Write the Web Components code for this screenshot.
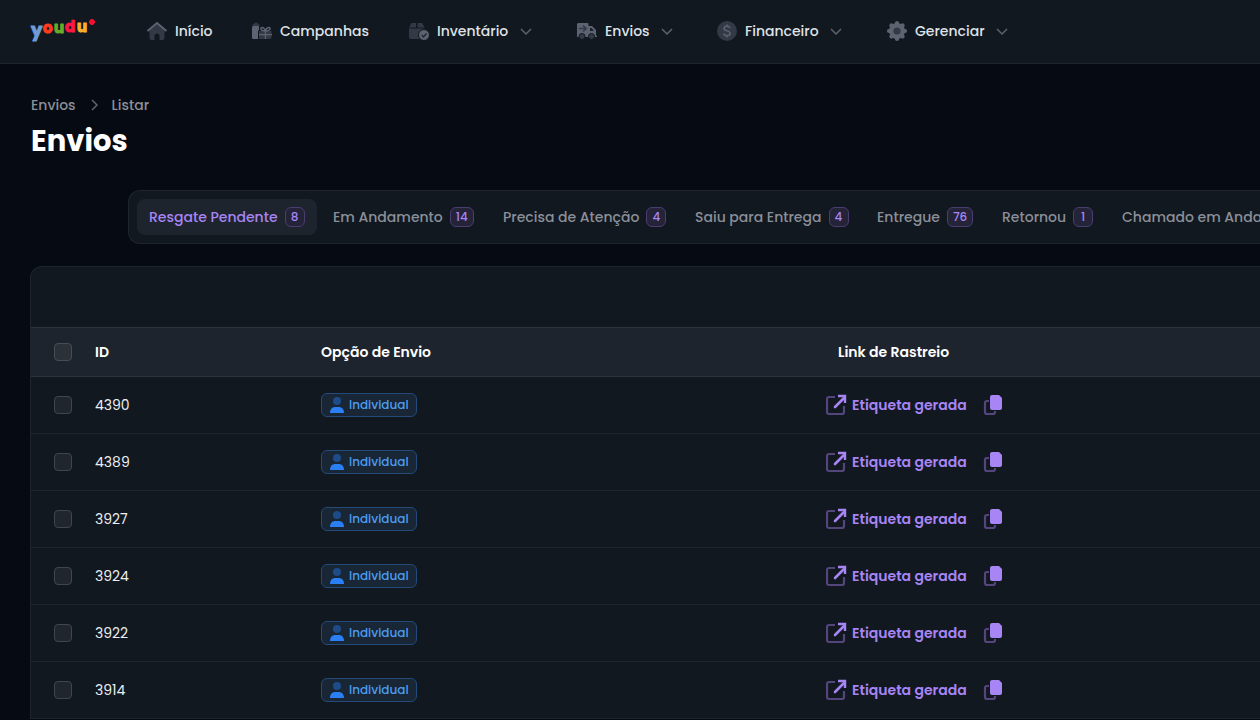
<!DOCTYPE html>
<html lang="pt-BR">
<head>
<meta charset="utf-8">
<meta name="viewport" content="width=device-width, initial-scale=1">
<title>Envios</title>
<style>
  html { background: #060a12; color-scheme: dark; }
  body {
    margin: 0;
    min-height: 100vh;
    overflow: hidden;
    color: #fff;
    background: #060a12;
    font: 500 14px/24px Poppins, Inter, sans-serif;
    -webkit-font-smoothing: antialiased;
    --surface: #111820;
    --surface-2: #1e242d;
    --line: #1f252e;
    --muted: #8b8f98;
    --icon: #5d6370;
    --icon-dim: #333a46;
    --violet: #a785f4;
  }
</style>
</head>
<body>
<app-page></app-page>
<script>
const define = (name, html, setup) => {
  const template = document.createElement('template');
  template.innerHTML = html;
  customElements.define(name, class extends HTMLElement {
    connectedCallback() {
      if (this.shadowRoot) return;
      this.attachShadow({ mode: 'open' }).append(template.content.cloneNode(true));
      if (setup) setup(this, this.shadowRoot);
    }
  });
};

const icons = {
  home: `<path d="M3.500 10v8a2 2 0 0 0 2 2h3v-4a2.500 2.500 0 0 1 5 0v4h3a2 2 0 0 0 2-2v-8L11 4z" fill="var(--icon-dim)"/><path d="M1.500 11 11 3l9.500 8" fill="none" stroke="var(--icon)" stroke-width="2"/>`,
  gifts: `<path d="M1.500 6V4.500L3 4l1-1.500L5 3l1.500-.5.5 1.500 1.500.5V6z" fill="var(--icon-dim)"/><path d="M2 6h6v4L7 11v8H2a2 2 0 0 1-1-1V7z" fill="var(--icon)"/><path d="M8 11h12.500v7l-1 1H8z" fill="var(--icon-dim)"/><path d="M8 14h13v1.200H8zM13.800 10.500H15V19h-1.200z" fill="var(--icon)"/><path d="M14.400 11C9 11 9 7.500 11 7.500c2 0 2.800 1.500 3.400 3.500.6-2 1.600-3.500 3.600-3.500s2 3.500-3.600 3.500z" fill="none" stroke="var(--icon)" stroke-width="1.400"/>`,
  box: `<path d="M3.500 3H8v4.500H1zM9.500 3H14l2.500 4.500h-7zM1 8.500h15.500V19H3a2 2 0 0 1-2-2z" fill="var(--icon-dim)"/><circle cx="16" cy="15" r="5.500" fill="var(--icon)" stroke="var(--surface)"/><path d="m13.700 15 1.800 1.800 3-3.300" stroke="#242b36" stroke-width="1.500" fill="none"/>`,
  truck: `<path d="M2 3h9.500a1 1 0 0 1 1 1v2H16l4 4v5.500h1V17H1V4z" fill="var(--icon)"/><path d="M14 8h1.600l2.400 3H14z" fill="#1b222c"/><path d="M3 8.500h7M7 5.500l3 3-3 3" stroke="#343b47" stroke-width="1.700" fill="none"/><circle cx="6" cy="16.500" r="3" fill="#343b47" stroke="var(--surface)"/><circle cx="15.500" cy="16.500" r="3" fill="#343b47" stroke="var(--surface)"/>`,
  coin: `<circle cx="11" cy="11" r="10" fill="var(--icon-dim)"/><path d="M14 8c-.5-1.300-1.700-1.700-3-1.700-1.700 0-3 .8-3 2.200 0 3 6.200 1.700 6.200 4.800 0 1.500-1.500 2.400-3.200 2.400s-3-.8-3.300-2.200M11 4.500v2M11 15.500v2" stroke="var(--icon)" stroke-width="1.500" fill="none"/>`,
  gear: `<circle cx="11" cy="11" r="8" fill="var(--icon)"/><g stroke="var(--icon)" stroke-width="4.200" stroke-linecap="round"><path d="M11 3v16M3 11h16M5.400 5.400l11.200 11.200M16.600 5.400 5.400 16.600"/></g><circle cx="11" cy="11" r="3.600" fill="#333a46"/>`
};

define('ui-icon', `<style>:host{display:block;flex:none;width:22px;height:22px}svg{display:block}</style>
  <svg width="22" height="22" viewBox="0 0 22 22" aria-hidden="true"></svg>`,
  (el, root) => { root.querySelector('svg').innerHTML = icons[el.getAttribute('name')]; });

define('brand-logo', `<style>
  :host{display:block}a,svg{display:block}
  svg{overflow:visible}
  text{font:700 15px/1 Poppins,Inter,sans-serif;stroke-width:1;stroke-linejoin:round}
  .tall{font-size:18px}
</style>
  <a href="#" aria-label="youdu"><svg width="66" height="26" viewBox="0 0 66 26">
    <text><tspan class="tall" x="0" y="18" fill="#6f9bd8" stroke="#6f9bd8">y</tspan><tspan x="12" y="15" fill="#ff3b1f" stroke="#ff3b1f">o</tspan><tspan x="23" y="15" fill="#6aaa2a" stroke="#6aaa2a">u</tspan><tspan x="34" y="14" fill="#ff1744" stroke="#ff1744">d</tspan><tspan x="46" y="14" fill="#ffae2b" stroke="#ffae2b">u</tspan></text>
    <path d="M61 1v6M58 4h6M59 2l4 4M63 2l-4 4" stroke="#f5112d" stroke-width="2"/>
  </svg></a>`);

define('nav-item', `<style>
  :host{display:block}
  a,button{display:flex;align-items:center;width:100%;gap:7px;padding:0;border:0;background:none;color:#dfe2e7;font:inherit;text-decoration:none;white-space:nowrap;cursor:pointer}
  .chevron{flex:none;width:20px;height:20px;margin-left:auto;fill:none;stroke:var(--icon);stroke-width:1.500}
</style>`, (el, root) => {
  const menu = el.hasAttribute('menu');
  const control = document.createElement(menu ? 'button' : 'a');
  if (menu) { control.type = 'button'; control.setAttribute('aria-haspopup', 'true'); } else control.href = '#';
  control.innerHTML = `<ui-icon name="${el.getAttribute('icon')}"></ui-icon><span><slot></slot></span>` +
    (menu ? '<svg class="chevron" viewBox="0 0 20 20" aria-hidden="true"><path d="m5 8 5 5 5-5"/></svg>' : '');
  root.append(control);
});

define('top-bar', `<style>
  :host{display:flex;align-items:center;height:62px;padding:0 0 1px 31px;background:var(--surface);border-bottom:1px solid var(--line)}
  brand-logo{flex:none;width:115px}
  nav{display:grid;grid-template-columns:65px 117px 128px 100px 130px 125px;column-gap:40px}
</style>
<brand-logo></brand-logo>
<nav aria-label="Principal">
  <nav-item icon="home">Início</nav-item>
  <nav-item icon="gifts">Campanhas</nav-item>
  <nav-item icon="box" menu>Inventário</nav-item>
  <nav-item icon="truck" menu>Envios</nav-item>
  <nav-item icon="coin" menu>Financeiro</nav-item>
  <nav-item icon="gear" menu>Gerenciar</nav-item>
</nav>`);

define('page-heading', `<style>
  :host{display:block;padding-left:31px}
  ol{display:flex;align-items:center;gap:10px;margin:0;padding:0;list-style:none}
  li{display:flex;align-items:center;gap:10px}
  a{color:var(--muted);text-decoration:none}
  svg{width:16px;height:16px;fill:none;stroke:var(--icon);stroke-width:1.500}
  h1{margin:6px 0 0;font-size:29px;font-weight:700;line-height:36px}
</style>
<nav aria-label="Trilha"><ol>
  <li><a href="#">Envios</a></li>
  <li><svg viewBox="0 0 16 16" aria-hidden="true"><path d="m6 3 5 5-5 5"/></svg><a href="#">Listar</a></li>
</ol></nav>
<h1>Envios</h1>`);

define('tab-item', `<style>
  :host{display:block}
  button{display:flex;align-items:center;gap:7px;width:100%;height:36px;padding:0 12px;border:0;border-radius:8px;background:none;color:var(--muted);font:inherit;white-space:nowrap;cursor:pointer}
  :host([selected]) button{background:var(--surface-2);color:var(--violet)}
  .count{box-sizing:border-box;min-width:20px;height:20px;padding:0 5px;border:1px solid #4a3d71;border-radius:6px;background:#242338;color:var(--violet);font-size:12px;line-height:18px;text-align:center}
</style>
<button type="button" role="tab"><span><slot></slot></span></button>`, (el, root) => {
  const button = root.querySelector('button');
  button.setAttribute('aria-selected', el.hasAttribute('selected'));
  if (el.hasAttribute('count')) {
    const badge = document.createElement('span');
    badge.className = 'count';
    badge.textContent = el.getAttribute('count');
    button.append(badge);
  }
});

define('status-tabs', `<style>
  :host{display:block;margin-left:128px;overflow:hidden;border:1px solid var(--line);border-right:0;border-radius:12px 0 0 12px;background:var(--surface)}
  div{display:grid;grid-template-columns:180px 166px 188px 178px 121px 116px auto;gap:4px;padding:8px}
</style>
<div role="tablist" aria-label="Situação">
  <tab-item count="8" selected>Resgate Pendente</tab-item>
  <tab-item count="14">Em Andamento</tab-item>
  <tab-item count="4">Precisa de Atenção</tab-item>
  <tab-item count="4">Saiu para Entrega</tab-item>
  <tab-item count="76">Entregue</tab-item>
  <tab-item count="1">Retornou</tab-item>
  <tab-item>Chamado em Andamento</tab-item>
</div>`);

define('option-badge', `<style>
  :host{display:flex;align-items:center;gap:4px;box-sizing:border-box;width:96px;height:24px;padding:0 7px;border:1px solid #234a78;border-radius:6px;background:#182636;color:#4d9cf0;font-size:12px;line-height:16px}
  svg{flex:none;width:16px;height:16px}
</style>
<svg viewBox="0 0 16 16" aria-hidden="true"><circle cx="8" cy="4" r="4" fill="#1e4c88"/><path d="M1 16c0-4 2.500-6 5-6h4c2.500 0 5 2 5 6z" fill="#2b7ff5"/></svg>
<slot></slot>`);

define('tracking-link', `<style>
  :host{display:flex;align-items:center}
  a{display:flex;align-items:center;gap:5px;width:157px;color:var(--violet);font-weight:600;text-decoration:none}
  button{padding:0;border:0;background:none;cursor:pointer}
  svg{display:block;width:21px;height:22px}
</style>
<a href="#"><svg viewBox="0 0 21 22" aria-hidden="true"><path d="M9 3H3a2 2 0 0 0-2 2v13a2 2 0 0 0 2 2h13a2 2 0 0 0 2-2v-6" fill="none" stroke="#54457d" stroke-width="2.200"/><path d="M9 13 17.500 4.500" stroke="#a785f4" stroke-width="2.600" stroke-linecap="round"/><path d="M12 2h7v7" fill="none" stroke="#a785f4" stroke-width="2.400"/></svg><span><slot></slot></span></a>
<button type="button" aria-label="Copiar link"><svg viewBox="0 0 21 22" aria-hidden="true"><path d="M6 7H4a2 2 0 0 0-2 2v9a2 2 0 0 0 2 2h6a2 2 0 0 0 2-2v-1" fill="none" stroke="#54457d" stroke-width="2.200"/><path d="M9 1h7l3 3v10a2 2 0 0 1-2 2H9a2 2 0 0 1-2-2V3a2 2 0 0 1 2-2z" fill="#a785f4"/></svg></button>`);

define('shipments-table', `<style>
  :host{display:block;margin-left:30px;overflow:hidden;border:1px solid var(--line);border-right:0;border-bottom:0;border-radius:12px 0 0 0;background:var(--surface)}
  .toolbar{height:60px}
  table{width:100%;table-layout:fixed;border-collapse:separate;border-spacing:0}
  .check{width:64px}.id{width:226px}.option{width:505px}
  th,td{padding:0;text-align:left;border-bottom:1px solid var(--line)}
  th{height:48px;border-top:1px solid #2d323b;border-bottom-color:#2d323b;background:var(--surface-2);font-weight:600}
  th:last-child{padding-left:12px}
  td{height:56px;color:#eceef1;font-weight:400}
  input{appearance:none;display:block;box-sizing:border-box;width:18px;height:18px;margin:0 0 0 23px;border:1px solid #41454e;border-radius:4px;background:#20252e}
  th input{background:#2b3039;border-color:#474b54}
  td option-badge{font-weight:500}
</style>
<div class="toolbar"></div>
<table>
  <colgroup><col class="check"><col class="id"><col class="option"><col></colgroup>
  <thead><tr><th scope="col"><input type="checkbox" aria-label="Selecionar todos"></th><th scope="col">ID</th><th scope="col">Opção de Envio</th><th scope="col">Link de Rastreio</th></tr></thead>
  <tbody></tbody>
</table>`, (el, root) => {
  root.querySelector('tbody').innerHTML = [4390, 4389, 3927, 3924, 3922, 3914].map(id =>
    `<tr><td><input type="checkbox" aria-label="Selecionar ${id}"></td><td>${id}</td><td><option-badge>Individual</option-badge></td><td><tracking-link>Etiqueta gerada</tracking-link></td></tr>`).join('');
});

define('app-page', `<style>
  :host{display:block}
  main{display:flex;flex-direction:column;padding-top:29px}
  status-tabs{margin-top:31px}
  shipments-table{margin-top:22px}
</style>
<top-bar></top-bar>
<main><page-heading></page-heading><status-tabs></status-tabs><shipments-table></shipments-table></main>`);
</script>
</body>
</html>
